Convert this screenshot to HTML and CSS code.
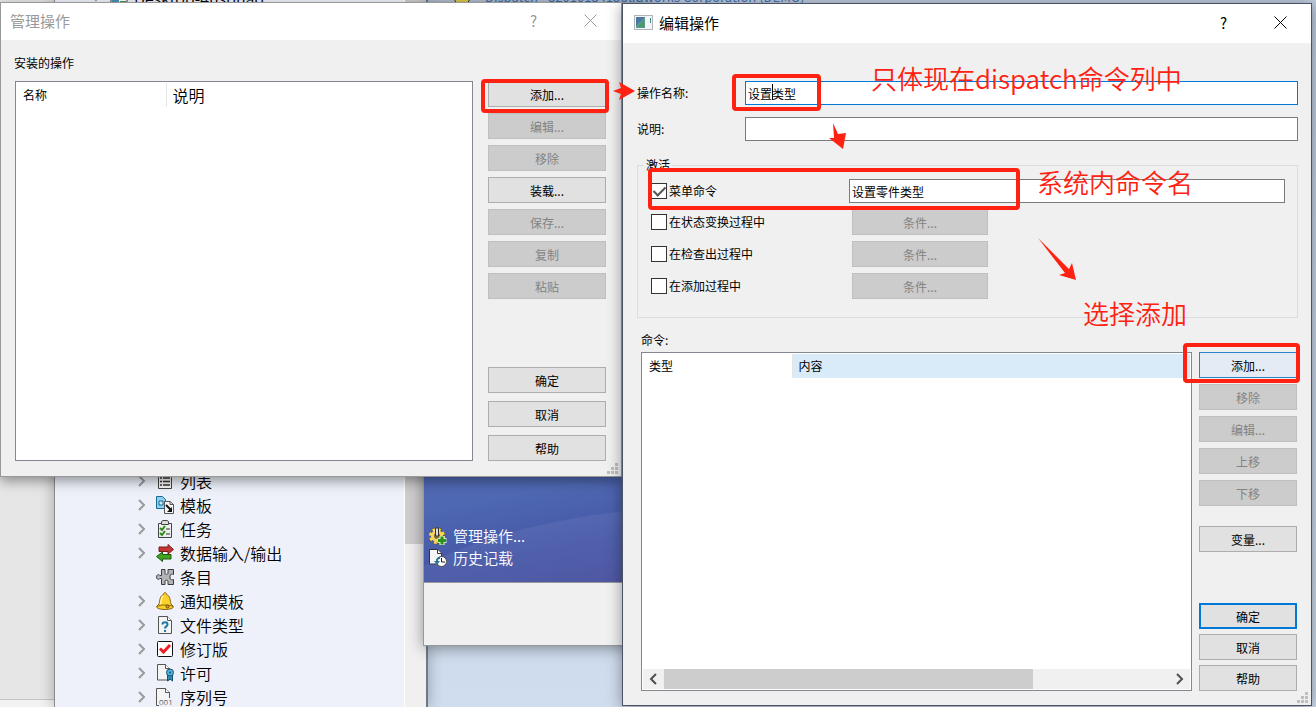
FILE: index.html
```
<!DOCTYPE html>
<html lang="zh-CN">
<head>
    <meta charset="utf-8">
    <title>编辑操作</title>
    <link rel="stylesheet" href="styles.css">
</head>
<body>
<div class="desktop">

    <div class="side"><div class="side-foot"></div></div>

    <!-- дерево -->
    <div class="tree-window">
        <ul class="tree">
            <li class="root"><svg class="arrow" viewBox="0 0 12 12"><path d="M2 4l4 4 4-4"/></svg>
                <svg class="icon" viewBox="0 0 18 18"><rect x="1" y="2" width="16" height="14" fill="#fff" stroke="#333"/><rect x="2" y="8" width="7" height="7" fill="#4a90b0"/><rect x="10" y="12" width="6" height="3" fill="#3a9a4a"/></svg>Desktop-4nsbnad</li>
            <li><svg class="arrow" viewBox="0 0 12 12"><path d="M3 1l5 5-5 5"/></svg>
                <svg class="icon" viewBox="0 0 18 18"><path d="M2.500 1.500h9l4 4v11h-13z" fill="#f4f4f4" stroke="#444"/><path d="M4 6h2M4 9.500h2M4 13h2M7 6h7M7 9.500h7M7 13h7" stroke="#333" stroke-width="1.500"/></svg>列表</li>
            <li><svg class="arrow" viewBox="0 0 12 12"><path d="M3 1l5 5-5 5"/></svg>
                <svg class="icon" viewBox="0 0 18 18"><path d="M.500.500h6l3 3v9h-9z" fill="#8fd0ee" stroke="#176a94"/><path d="M3 5h4v4H3z" fill="#c8ecfa" stroke="#176a94"/><path d="M8.500 5.500h5.500l3.500 3v9h-9z" fill="#f5f5f5" stroke="#555"/><path d="M14 5.500v3h3.500" fill="none" stroke="#555"/><path d="M10 9l5 5" stroke="#111" stroke-width="2"/><path d="M16 11v5h-5z" fill="#111"/></svg>模板</li>
            <li><svg class="arrow" viewBox="0 0 12 12"><path d="M3 1l5 5-5 5"/></svg>
                <svg class="icon" viewBox="0 0 18 18"><path d="M2.500 3.500h13v14h-13z" fill="#eee" stroke="#444"/><path d="M5.500 4.500v-3l1.500-1h4l1.500 1v3z" fill="#ddd" stroke="#444"/><path d="M4 8l2 2 3-4M4 13l2 2 3-4" fill="none" stroke="#2c8a1a" stroke-width="2"/><path d="M10 9h4M10 14h4" stroke="#333"/></svg>任务</li>
            <li><svg class="arrow" viewBox="0 0 12 12"><path d="M3 1l5 5-5 5"/></svg>
                <svg class="icon" viewBox="0 0 18 18"><path d="M3 3h9V.500L17.500 5.500 12 10V7.500H3z" fill="#c43434" stroke="#7a1c1c"/><path d="M15 10.500H6.500V8L.500 12.500 6.500 17.500V15H15z" fill="#43a31f" stroke="#1c5a10"/></svg>数据输入/输出</li>
            <li><span class="arrow"></span>
                <svg class="icon" viewBox="0 0 18 18"><path d="M5.500 1.500H9v4c0 1 3 1 3 0v-4h5.500v5c-1-.500-3.500-.500-3.500 1.500v2c0 2 2.500 2 3.500 1.500v5H12v-3.500c0-1-3-1-3 0v3.500H5.500V10.500H4C3 12 .500 11.500.500 9S3 6 4 7.500h1.500z" fill="#b4b4b8" stroke="#3c3c3c"/></svg>条目</li>
            <li><svg class="arrow" viewBox="0 0 12 12"><path d="M3 1l5 5-5 5"/></svg>
                <svg class="icon" viewBox="0 0 18 18"><path d="M7.500 2.500c0-2.500 3-2.500 3 0 4 1.500 3.500 6 4.500 9.500l2.500 2.500c0 4-17 4-17 0L3 12c1-3.500.500-8 4.500-9.500z" fill="#fbd12c" stroke="#8a6410"/><path d="M7 4c-2 2-1.500 5-2.500 8" fill="none" stroke="#fff3b0" stroke-width="1.500"/><path d="M1 14.500c4-2 12-2 16 0" fill="none" stroke="#8a6410"/><circle cx="11.500" cy="14.500" r="1.500" fill="#e8a010" stroke="#6a4808"/></svg>通知模板</li>
            <li><svg class="arrow" viewBox="0 0 12 12"><path d="M3 1l5 5-5 5"/></svg>
                <svg class="icon" viewBox="0 0 18 18"><path d="M2.500.500h9l4 4v13h-13z" fill="#f4f4f4" stroke="#555"/><path d="M11.500.500v4h4" fill="#fff" stroke="#555"/><path d="M6.500 8.500c0-3 5-3 5 0 0 2-2.500 1.800-2.500 4" fill="none" stroke="#1e78a4" stroke-width="2"/><path d="M8 14h2v2H8z" fill="#1e78a4"/></svg>文件类型</li>
            <li><svg class="arrow" viewBox="0 0 12 12"><path d="M3 1l5 5-5 5"/></svg>
                <svg class="icon" viewBox="0 0 18 18"><rect x="1.500" y="1.500" width="15" height="15" rx="1" fill="#fff" stroke="#111"/><path d="M4 8.500l3.500 3.500 6.500-7" fill="none" stroke="#ee1c24" stroke-width="3"/></svg>修订版</li>
            <li><svg class="arrow" viewBox="0 0 12 12"><path d="M3 1l5 5-5 5"/></svg>
                <svg class="icon" viewBox="0 0 18 18"><path d="M1.500.500h8l4 4v11.500h-12z" fill="#f4f4f4" stroke="#555"/><path d="M9.500.500v4h4" fill="#fff" stroke="#555"/><path d="M11.500 10v7l2.500-2 2.500 2v-7z" fill="#2b8fc0" stroke="#145070"/><circle cx="14" cy="8.500" r="3.500" fill="#54b4de" stroke="#145070"/><circle cx="14" cy="8.500" r="1" fill="#145070"/></svg>许可</li>
            <li><svg class="arrow" viewBox="0 0 12 12"><path d="M3 1l5 5-5 5"/></svg>
                <svg class="icon" viewBox="0 0 18 18"><path d="M3 17.500H.500V.500h9l4 4V10" fill="#f4f4f4" stroke="#555"/><path d="M9.500.500v4h4" fill="#fff" stroke="#555"/><text x="3" y="17" class="icon-text">001</text></svg>序列号</li>
        </ul>
        <div class="tree-scroll"><div class="tree-thumb"></div></div>
    </div>

    <!-- dispatch -->
    <div class="back-title">
        <svg class="icon" viewBox="0 0 18 18"><circle cx="9" cy="9" r="8" fill="#f0d850" stroke="#333"/></svg>
        Dispatch - 3201013413olidworks Corporation (DEMO)
    </div>
    <div class="menu-window">
        <div class="menu">
            <svg class="menu-wave" viewBox="0 0 198 106" preserveAspectRatio="none"><path d="M0 90C50 60 110 42 198 32V106H0z" fill="#fff" opacity=".06"/></svg>
            <a href="#"><svg class="icon" viewBox="0 0 18 18"><circle cx="8" cy="9" r="6.500" fill="none" stroke="#6a5410" stroke-width="4" stroke-dasharray="3.400 1.700"/><circle cx="8" cy="9" r="6.500" fill="none" stroke="#f6d65c" stroke-width="3" stroke-dasharray="2.800 2.300"/><circle cx="8" cy="9" r="4.500" fill="none" stroke="#f6d65c" stroke-width="3"/><circle cx="8" cy="9" r="3" fill="#8a7430"/><path d="M6.500 1h3v8h-3z" fill="#ddd" stroke="#333"/><path d="M13 9v9M8.500 13.500h9" stroke="#d8f0d0" stroke-width="5"/><path d="M13 9.500v8M9 13.500h8" stroke="#2f8f16" stroke-width="3"/></svg>管理操作...</a>
            <a href="#"><svg class="icon" viewBox="0 0 18 18"><path d="M.500.500h8l4 4V15h-12z" fill="#f6f6f6" stroke="#333"/><path d="M8.500.500v4h4" fill="#fff" stroke="#333"/><circle cx="12.500" cy="12.500" r="5" fill="#fff" stroke="#444"/><path d="M12.500 9v4H16" fill="none" stroke="#111"/><path d="M11 8c-3 0-4 2-4 4H5l3 4 3-4H9c0-2 1-2 2-2z" fill="#1f7096"/></svg>历史记载</a>
        </div>
    </div>

    <!-- 管理操作 -->
    <div class="window manage">
        <div class="titlebar">
            <span class="title">管理操作</span>
            <button class="sys">?</button>
            <button class="sys" aria-label="关闭"><svg viewBox="0 0 13 13"><path d="M.500.500l12 12M12.500.500l-12 12"/></svg></button>
        </div>
        <div class="manage-body">
            <div class="caption">安装的操作</div>
            <div class="columns">
                <div class="list">
                    <table>
                        <tr><th class="first">名称</th><th class="big">说明</th></tr>
                    </table>
                </div>
                <div class="buttons">
                    <button class="btn">添加...</button>
                    <button class="btn" disabled>编辑...</button>
                    <button class="btn" disabled>移除</button>
                    <button class="btn">装载...</button>
                    <button class="btn" disabled>保存...</button>
                    <button class="btn" disabled>复制</button>
                    <button class="btn" disabled>粘贴</button>
                    <div class="bottom">
                        <button class="btn">确定</button>
                        <button class="btn">取消</button>
                        <button class="btn">帮助</button>
                    </div>
                </div>
            </div>
        </div>
        <svg class="grip" viewBox="0 0 12 12"><path d="M8 0h3v3H8zM4 4h3v3H4zM8 4h3v3H8zM0 8h3v3H0zM4 8h3v3H4zM8 8h3v3H8z"/></svg>
    </div>

    <!-- 编辑操作 -->
    <div class="window edit">
        <div class="titlebar">
            <svg class="app-icon" viewBox="0 0 19 15"><rect x=".500" y=".500" width="18" height="14" fill="#f4f6f8" stroke="#b0b4b8"/><rect x="2" y="2" width="9" height="11" fill="#5a9a90"/><path d="M2 2h9l-9 9z" fill="#4a78a0"/><path d="M4 12l6-7v7z" fill="#4a9a68"/><path d="M16.500 3v5" stroke="#3a8f80"/></svg>
            <span class="title">编辑操作</span>
            <button class="sys">?</button>
            <button class="sys" aria-label="关闭"><svg viewBox="0 0 13 13"><path d="M.500.500l12 12M12.500.500l-12 12"/></svg></button>
        </div>
        <div class="edit-body">
            <div class="fields">
                <label for="name">操作名称:</label>
                <input type="text" class="text focus" id="name" value="设置类型">
                <label for="desc">说明:</label>
                <input type="text" class="text" id="desc">
            </div>
            <fieldset>
                <legend>激活</legend>
                <div class="options">
                    <label class="check"><input type="checkbox" checked>菜单命令</label>
                    <input type="text" class="text" aria-label="菜单命令" value="设置零件类型">
                    <label class="check"><input type="checkbox">在状态变换过程中</label>
                    <button class="btn" disabled>条件...</button>
                    <label class="check"><input type="checkbox">在检查出过程中</label>
                    <button class="btn" disabled>条件...</button>
                    <label class="check"><input type="checkbox">在添加过程中</label>
                    <button class="btn" disabled>条件...</button>
                </div>
            </fieldset>
            <div class="commands">
                <div class="caption">命令:</div>
                <div class="columns">
                    <div class="list">
                        <table>
                            <tr><th class="first">类型</th><th class="hot">内容</th></tr>
                        </table>
                        <div class="scroll">
                            <button aria-label="左"><svg viewBox="0 0 12 12"><path d="M8 1L3 6l5 5"/></svg></button>
                            <div class="track"><div class="thumb"></div></div>
                            <button aria-label="右"><svg viewBox="0 0 12 12"><path d="M3 1l5 5-5 5"/></svg></button>
                        </div>
                    </div>
                    <div class="buttons">
                        <button class="btn hover">添加...</button>
                        <button class="btn" disabled>移除</button>
                        <button class="btn" disabled>编辑...</button>
                        <button class="btn" disabled>上移</button>
                        <button class="btn" disabled>下移</button>
                        <button class="btn vars">变量...</button>
                        <div class="bottom">
                            <button class="btn default">确定</button>
                            <button class="btn">取消</button>
                            <button class="btn">帮助</button>
                        </div>
                    </div>
                </div>
            </div>
        </div>
        <svg class="grip" viewBox="0 0 12 12"><path d="M8 0h3v3H8zM4 4h3v3H4zM8 4h3v3H8zM0 8h3v3H0zM4 8h3v3H4zM8 8h3v3H8z"/></svg>
    </div>

    <!-- red notes over the windows -->
    <div class="frame frame-add"></div>
    <div class="frame frame-name"></div>
    <div class="frame frame-menu"></div>
    <div class="frame frame-command"></div>
    <div class="caret"></div>
    <svg class="pointer pointer-right" viewBox="0 0 22 18"><path d="M0 9l8-3L6 0l16 9L6 18l2-6z"/></svg>
    <svg class="pointer pointer-down" viewBox="0 0 18 26"><path d="M4 0l5 11 8-1-3 16L0 15l5 0z"/></svg>
    <svg class="pointer pointer-diag" viewBox="0 0 38 42"><path d="M0 0l31 31 3-6 4 17-17-5 6-2z"/></svg>
    <div class="note note-name">只体现在dispatch命令列中</div>
    <div class="note note-menu">系统内命令名</div>
    <div class="note note-add">选择添加</div>
</div>
</body>
</html>
```
FILE: styles.css
```
* {
    box-sizing: border-box;
}

body {
    margin: 0;
    font-family: "Noto Sans CJK SC", sans-serif;
    font-size: 12px;
    line-height: 16px;
    color: #000;
}

button, input {
    font-family: inherit;
    font-size: 12px;
    line-height: 16px;
    margin: 0;
}

.desktop {
    position: relative;
    height: 100vh;
    overflow: hidden;
    background: linear-gradient(#bfcce0, #d0ddee);
}

/* background windows */
.side {
    position: absolute;
    left: 0;
    top: 0;
    bottom: 0;
    width: 54px;
    display: flex;
    align-items: flex-end;
    background: #e6e6e6;
}

.side-foot {
    flex: 1;
    height: 8px;
    border-top: 1px solid #c4c4c4;
    background: #f2f2f2;
}

.tree-window {
    position: absolute;
    left: 54px;
    top: 0;
    bottom: 0;
    width: 374px;
    display: flex;
    border-left: 1px solid #8c8c8c;
    border-right: 2px solid #6d7a8c;
    background: #eef1fa;
    box-shadow: 0 0 14px rgba(0, 0, 0, 0.3);
}

.tree {
    flex: 1;
    margin: -14px 0 0;
    padding: 0 0 0 81px;
    list-style: none;
    font-size: 16px;
    font-weight: 350;
}

.tree li {
    display: flex;
    align-items: center;
    height: 24px;
    white-space: nowrap;
}

.tree .root {
    margin: 0 0 459px -46px;
}

.arrow {
    width: 12px;
    height: 12px;
    margin-right: 8px;
    fill: none;
    stroke: #9a9a9a;
    stroke-width: 2;
}

.icon {
    flex: none;
    width: 18px;
    height: 18px;
    margin-right: 6px;
}

.icon-text {
    font-family: "Noto Sans", sans-serif;
    font-size: 8px;
    fill: #222;
}

.tree-scroll {
    width: 22px;
    height: 100%;
    border-left: 1px solid #fff;
    background: #f0f0f0;
}

.tree-thumb {
    height: 77%;
    background: #cdcdcd;
}

.back-title {
    position: absolute;
    left: 453px;
    top: -12px;
    display: flex;
    align-items: center;
    gap: 8px;
    font-size: 13px;
    color: #4474b4;
    white-space: nowrap;
}

.menu-window {
    position: absolute;
    left: 423px;
    top: 4px;
    width: 230px;
    height: 642px;
    border: 1px solid #999;
    background: #f0f0f0;
    box-shadow: 0 2px 14px rgba(0, 0, 0, 0.4);
}

.menu {
    position: relative;
    display: flex;
    flex-direction: column;
    justify-content: flex-end;
    height: 578px;
    padding: 0 0 13px 5px;
    border-bottom: 1px solid #999;
    background: linear-gradient(170deg, #5068b4 75%, #4e68b2 82%, #4656a6 92%, #444c9c);
}

.menu-wave {
    position: absolute;
    left: 0;
    bottom: 0;
    width: 100%;
    height: 106px;
}

.menu a {
    display: flex;
    align-items: center;
    height: 22px;
    font-size: 15px;
    font-weight: 350;
    color: #fff;
    text-decoration: none;
}

/* dialogs */
.window {
    position: absolute;
    background: #f0f0f0;
}

.manage {
    left: 0;
    top: 2px;
    width: 622px;
    border: 1px solid #999;
    box-shadow: 0 4px 12px rgba(0, 0, 0, 0.4);
}

.edit {
    left: 622px;
    right: 4px;
    top: 3px;
    border: 1px solid #4a5264;
    box-shadow: 0 2px 14px rgba(0, 0, 0, 0.4);
}

.titlebar {
    display: flex;
    align-items: center;
    height: 37px;
    padding: 0 2px 2px 9px;
    background: #fff;
    color: #999;
}

.edit .titlebar {
    height: 39px;
    padding-left: 11px;
    color: #000;
}

.app-icon {
    width: 19px;
    height: 15px;
    margin-right: 6px;
}

.title {
    flex: 1;
    font-size: 15px;
}

.sys {
    display: flex;
    align-items: center;
    justify-content: center;
    width: 57px;
    height: 35px;
    padding: 0;
    border: 0;
    background: none;
    font-size: 15px;
    color: inherit;
}

.sys svg {
    width: 13px;
    height: 13px;
    fill: none;
    stroke: currentColor;
}

.manage-body {
    padding: 15px 15px 15px 14px;
}

.manage .caption {
    margin-left: -1px;
}

.manage .columns {
    display: flex;
    gap: 15px;
    margin-top: 10px;
}

.list {
    flex: 1;
    display: flex;
    flex-direction: column;
    justify-content: space-between;
    padding: 1px;
    border: 1px solid #828790;
    background: #fff;
}

.list table {
    width: 100%;
    border-collapse: collapse;
}

.list th {
    height: 24px;
    padding: 0 6px;
    font-weight: normal;
    text-align: left;
}

.list .first {
    width: 149px;
    border-right: 1px solid #e5e5e5;
}

.list .big {
    font-size: 16px;
    font-weight: 350;
}

.list .hot {
    background: #d9ebf9;
}

.buttons {
    display: flex;
    flex-direction: column;
    gap: 6px;
    width: 118px;
}

.bottom {
    display: flex;
    flex-direction: column;
    gap: 8px;
    margin-top: 62px;
}

.btn {
    height: 26px;
    padding: 2px 0 0;
    border: 1px solid #adadad;
    background: #e1e1e1;
    color: #000;
    text-align: center;
}

.btn:disabled {
    border-color: #bfbfbf;
    background: #ccc;
    color: #838383;
}

.btn.hover {
    border-color: #2a84c8;
    background: #e5ebf4;
}

.btn.default {
    border: 2px solid #0078d7;
}

.grip {
    position: absolute;
    right: 2px;
    bottom: 1px;
    width: 12px;
    height: 12px;
    fill: #bfbfbf;
}

.edit-body {
    padding: 38px 13px 14px 14px;
}

.fields {
    display: grid;
    grid-template-columns: 108px 1fr;
    row-gap: 12px;
    align-items: center;
}

.text {
    width: 100%;
    height: 24px;
    padding: 0 2px;
    border: 1px solid #7a7a7a;
    background: #fff;
    color: #000;
}

.text.focus {
    border-color: #0078d7;
}

.caret {
    position: absolute;
    left: 772px;
    top: 84px;
    width: 1px;
    height: 16px;
    background: #000;
}

fieldset {
    min-width: 0;
    margin: 16px 0 0;
    padding: 6px 12px 18px 13px;
    border: 1px solid #dcdcdc;
}

legend {
    margin-left: -7px;
    padding: 0 2px;
}

.options {
    display: grid;
    grid-template-columns: 198px 1fr;
    row-gap: 6px;
}

.options .btn {
    width: 136px;
    margin-left: 3px;
}

.check {
    display: flex;
    align-items: center;
    gap: 2px;
}

.check input {
    appearance: none;
    display: flex;
    justify-content: center;
    width: 16px;
    height: 16px;
    border: 1px solid #333;
    background: #fff;
}

.check input:checked::after {
    content: "";
    width: 5px;
    height: 10px;
    border: solid #555;
    border-width: 0 2px 2px 0;
    transform: rotate(45deg);
}

.commands {
    margin: 14px 1px 0 4px;
}

.commands .columns {
    display: flex;
    gap: 7px;
    margin-top: 4px;
}

.commands .buttons {
    width: 98px;
}

.commands .vars {
    margin-top: 14px;
}

.commands .bottom {
    gap: 5px;
    margin-top: 45px;
}

.scroll {
    display: flex;
    height: 20px;
    background: #f0f0f0;
}

.scroll button {
    display: flex;
    align-items: center;
    justify-content: center;
    width: 21px;
    padding: 0;
    border: 0;
    background: none;
}

.scroll svg {
    width: 12px;
    height: 12px;
    fill: none;
    stroke: #505050;
    stroke-width: 2;
}

.track {
    flex: 1;
}

.thumb {
    width: 73%;
    height: 100%;
    background: #cdcdcd;
}

/* notes */
.frame {
    position: absolute;
    border: 4px solid #ff2111;
    border-radius: 4px;
}

.frame-add {
    left: 481px;
    top: 79px;
    width: 128px;
    height: 34px;
}

.frame-name {
    left: 732px;
    top: 74px;
    width: 89px;
    height: 37px;
}

.frame-menu {
    left: 648px;
    top: 168px;
    width: 372px;
    height: 42px;
}

.frame-command {
    left: 1183px;
    top: 343px;
    width: 117px;
    height: 40px;
}

.pointer {
    position: absolute;
    fill: #ff2111;
}

.pointer-right {
    left: 613px;
    top: 82px;
    width: 22px;
    height: 18px;
}

.pointer-down {
    left: 829px;
    top: 123px;
    width: 18px;
    height: 26px;
}

.pointer-diag {
    left: 1038px;
    top: 238px;
    width: 38px;
    height: 42px;
}

.note {
    position: absolute;
    font-size: 26px;
    font-weight: 350;
    line-height: 32px;
    color: #ff2111;
    white-space: nowrap;
}

.note-name {
    left: 871px;
    top: 62px;
}

.note-menu {
    left: 1037px;
    top: 166px;
}

.note-add {
    left: 1083px;
    top: 297px;
}
```
